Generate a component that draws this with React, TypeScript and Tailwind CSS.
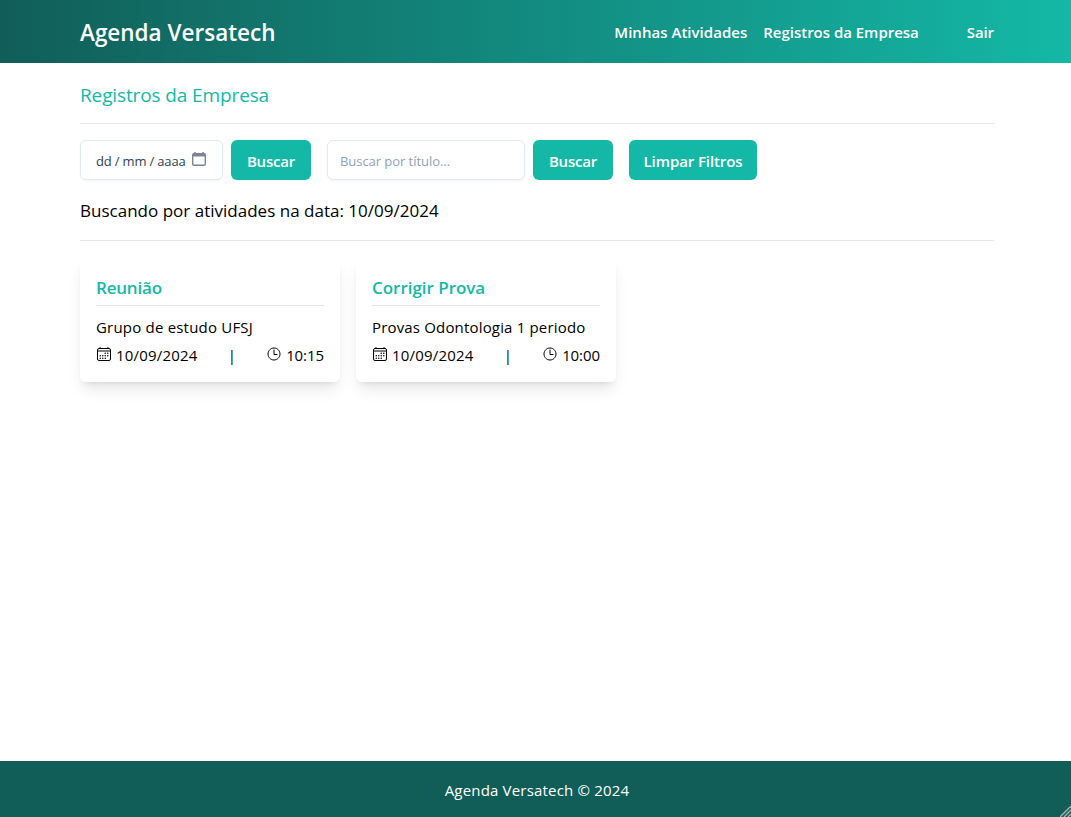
import { IoCalendarOutline, IoTimeOutline } from "react-icons/io5";

type Activity = {
  title: string;
  description: string;
  date: string;
  time: string;
  descriptionClass: string;
  titleClass: string;
};

const activities: Activity[] = [
  {
    title: "Reunião",
    description: "Grupo de estudo UFSJ",
    date: "10/09/2024",
    time: "10:15",
    titleClass: "tracking-[-0.2px]",
    descriptionClass: "tracking-[0.2px]",
  },
  {
    title: "Corrigir Prova",
    description: "Provas Odontologia 1 periodo",
    date: "10/09/2024",
    time: "10:00",
    titleClass: "tracking-[-0.03px]",
    descriptionClass: "tracking-[0.17px]",
  },
];

function Header() {
  return (
    <header className="flex h-[63px] shrink-0 items-center justify-between bg-[linear-gradient(to_right,#115e59,#14b8a6)] pt-[2px] pr-[77px] pl-20 font-semibold text-white">
      <h1 className="text-[22.5px] whitespace-nowrap">Agenda Versatech</h1>
      <nav className="flex items-center text-[15px] whitespace-nowrap">
        <a className="mr-4 tracking-[0.03px]">Minhas Atividades</a>
        <a className="mr-12 tracking-[-0.02px]">Registros da Empresa</a>
        <a className="tracking-[-0.1px]">Sair</a>
      </nav>
    </header>
  );
}

function DateField() {
  return (
    <div className="mr-2 flex h-10 w-[143px] items-center rounded-md border border-slate-200 pt-[3px] pl-[15px] text-[13px] text-slate-700 shadow-xs">
      <span className="tracking-[-0.1px]">dd</span>
      <span className="mx-[3px]">/</span>
      <span className="tracking-[-0.1px]">mm</span>
      <span className="mx-[3px]">/</span>
      <span className="tracking-[-0.1px]">aaaa</span>
      <svg className="mb-[5px] ml-[6px]" width="14" height="14" viewBox="0 0 14 14" fill="none">
        <path d="M3 0v2M11 0v2" stroke="#7b8494" strokeWidth="1.6" />
        <rect x="0.7" y="1.7" width="12.6" height="11.6" rx="1.3" stroke="#7b8494" strokeWidth="1.4" />
        <path d="M1 1.5h12v3H1z" fill="#7b8494" />
      </svg>
    </div>
  );
}

function Filters() {
  const button = "h-10 rounded-md bg-[#14b8a6] pt-[2px] text-[15px] font-semibold text-white whitespace-nowrap";
  return (
    <div className="flex h-10">
      <DateField />
      <button className={button + " mr-4 w-20 tracking-[-0.2px]"}>Buscar</button>
      <input
        className="mr-2 h-10 w-[198px] rounded-md border border-slate-200 px-3 pt-px text-[13px] tracking-[-0.05px] shadow-xs placeholder:text-slate-400"
        placeholder="Buscar por título..."
      />
      <button className={button + " mr-4 w-20 tracking-[-0.2px]"}>Buscar</button>
      <button className={button + " w-32 tracking-[-0.1px]"}>Limpar Filtros</button>
    </div>
  );
}

function ActivityCard({ activity }: { activity: Activity }) {
  return (
    <article className="h-[125px] w-[260px] rounded-md bg-white px-4 pt-[17px] shadow-lg">
      <h3 className="h-[32px] border-b border-gray-200 text-[17px] leading-7 font-semibold whitespace-nowrap text-[#14b8a6]">
        <span className={activity.titleClass}>{activity.title}</span>
      </h3>
      <p className="mt-[9px] text-[15px] leading-6 whitespace-nowrap">
        <span className={activity.descriptionClass}>{activity.description}</span>
      </p>
      <div className="mt-1 flex items-center justify-between text-[15px] leading-6">
        <span className="flex items-center gap-1">
          <IoCalendarOutline className="mb-[3px]" size={16} />
          <span className="tracking-[0.2px]">{activity.date}</span>
        </span>
        <span>|</span>
        <span className="flex items-center gap-1">
          <IoTimeOutline className="mb-[3px]" size={16} />
          <span className="tracking-[-0.08px]">{activity.time}</span>
        </span>
      </div>
    </article>
  );
}

export default function App() {
  return (
    <div className="flex h-[817px] w-full flex-col overflow-hidden bg-white font-['Open_Sans','Noto_Sans',sans-serif] text-black">
      <Header />
      <main className="flex flex-1 flex-col pr-[77px] pl-20">
        <h2 className="h-[61px] border-b border-gray-200 pt-[18px] text-[19px] leading-7 text-[#14b8a6]">
          <span className="tracking-[-0.12px]">Registros da Empresa</span>
        </h2>
        <div className="mt-4">
          <Filters />
        </div>
        <p className="h-[61px] border-b border-gray-200 pt-[17px] text-[17px] leading-7">
          <span className="tracking-[0.01px]">Buscando por atividades na data: 10/09/2024</span>
        </p>
        <section className="mt-4 flex gap-4">
          {activities.map((activity) => (
            <ActivityCard key={activity.title} activity={activity} />
          ))}
        </section>
      </main>
      <footer className="relative flex h-14 shrink-0 items-center justify-center bg-[#115e59] pt-[2px] pl-[3px] text-[15px] text-white">
        <span className="tracking-[0.19px]">Agenda Versatech © 2024</span>
        <svg className="absolute right-0 bottom-0" width="11" height="11" viewBox="0 0 11 11" stroke="#b0b4b4" strokeWidth="1.3">
          <path d="M0 11L11 0M4 11L11 4M8 11L11 8" />
        </svg>
      </footer>
    </div>
  );
}
